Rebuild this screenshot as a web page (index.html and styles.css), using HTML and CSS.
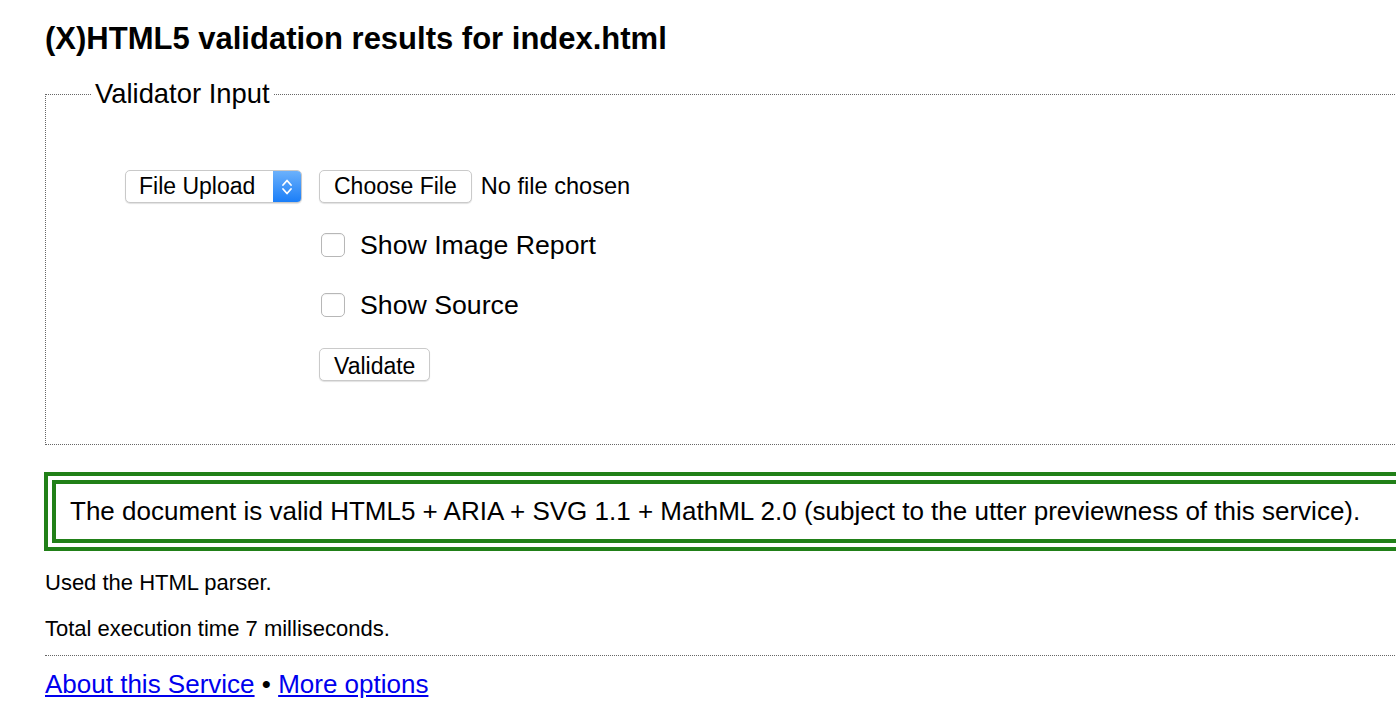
FILE: index.html
```html
<!DOCTYPE html>
<html lang="en">
<head>
<meta charset="utf-8">
<title>Validation results</title>
<link rel="stylesheet" href="styles.css">
</head>
<body>
<div class="page">
  <h1 class="title">(X)HTML5 validation results for index.html</h1>
  <fieldset class="input-box">
    <legend class="legend">Validator Input</legend>
    <div class="form-grid">
      <div class="select">
        <span class="select-text">File Upload</span>
        <span class="select-arrow">
          <svg width="14" height="24" viewBox="0 0 14 24"><path d="M3 10 L7 5.5 L11 10 M3 14 L7 18.5 L11 14" fill="none" stroke="#fff" stroke-width="1.8" stroke-linecap="round" stroke-linejoin="round"/></svg>
        </span>
      </div>
      <div class="file-row">
        <span class="btn">Choose File</span>
        <span class="file-note">No file chosen</span>
      </div>
      <label class="check-row row-a"><input type="checkbox" class="check"><span>Show Image Report</span></label>
      <label class="check-row row-b"><input type="checkbox" class="check"><span>Show Source</span></label>
      <div class="btn-row"><span class="btn btn-validate">Validate</span></div>
    </div>
  </fieldset>
  <div class="success">The document is valid HTML5 + ARIA + SVG 1.1 + MathML 2.0 (subject to the utter previewness of this service).</div>
  <p class="stat">Used the HTML parser.</p>
  <p class="stat stat-second">Total execution time 7 milliseconds.</p>
  <hr class="rule">
  <p class="links"><a href="#">About this Service</a> • <a href="#">More options</a></p>
</div>
</body>
</html>
```
FILE: styles.css
```css
html, body {
  margin: 0;
  padding: 0;
  background: #fff;
  overflow: hidden;
}
body {
  font-family: "Liberation Sans", Arial, sans-serif;
  color: #000;
}
.page {
  width: 1500px;
  padding-left: 45px;
}
.title {
  margin: 21px 0 0;
  font-size: 31px;
  line-height: 36px;
  font-weight: bold;
}
.input-box {
  margin: 22px 0 0;
  border: 1px dotted #666;
  padding: 61px 0 63px 46px;
  min-width: 0;
}
.legend {
  padding: 0 3px;
  font-size: 27.4px;
  line-height: 30px;
}
.form-grid {
  display: grid;
  grid-template-columns: 177px auto;
  column-gap: 17px;
  margin-left: 33px;
  align-items: center;
}
.select {
  grid-column: 1;
  display: flex;
  height: 33px;
  box-sizing: border-box;
  border: 1px solid #c9c9c9;
  border-radius: 5px;
  box-shadow: 0 1px 1px rgba(0,0,0,0.12);
  overflow: hidden;
  background: #fff;
}
.select-text {
  flex: 1;
  font-size: 23px;
  line-height: 31px;
  padding-left: 13px;
}
.select-arrow {
  width: 28px;
  display: flex;
  align-items: center;
  justify-content: center;
  background: linear-gradient(#6cb1fb, #1a7ef8);
}
.file-row, .btn-row, .check-row {
  grid-column: 2;
  display: flex;
  align-items: center;
}
.file-row { height: 33px; }
.btn {
  display: inline-flex;
  align-items: center;
  height: 33px;
  box-sizing: border-box;
  padding: 0 14px;
  border: 1px solid #cacaca;
  border-radius: 5px;
  box-shadow: 0 1px 1px rgba(0,0,0,0.12);
  background: #fff;
  font-size: 23px;
}
.btn-validate {
  padding-top: 3px;
}
.file-note {
  margin-left: 9px;
  font-size: 23.6px;
}
.check-row {
  height: 30px;
  font-size: 26.7px;
}
.row-a { margin-top: 27px; }
.row-b { margin-top: 30px; }
.check {
  appearance: none;
  -webkit-appearance: none;
  width: 24px;
  height: 24px;
  margin: 0 15px 0 2px;
  box-sizing: border-box;
  border: 1px solid #b7b7b7;
  border-radius: 5px;
  background: #fff;
  box-shadow: inset 0 1px 1px rgba(0,0,0,0.05);
}
.btn-row {
  height: 33px;
  margin-top: 28px;
}
.success {
  margin: 27px 0 0 -1px;
  border: 12px double #218018;
  padding: 12px 14px 13px;
  font-size: 26px;
  line-height: 30px;
}
.stat {
  margin: 19px 0 0;
  font-size: 22px;
  line-height: 25px;
}
.stat-second { margin-top: 21px; }
.rule {
  margin: 14px 0 0;
  border: 0;
  border-top: 1px dotted #666;
  height: 0;
}
.links {
  margin: 13px 0 0;
  font-size: 26px;
  line-height: 30px;
}
.links a {
  color: #0000ee;
}
```
